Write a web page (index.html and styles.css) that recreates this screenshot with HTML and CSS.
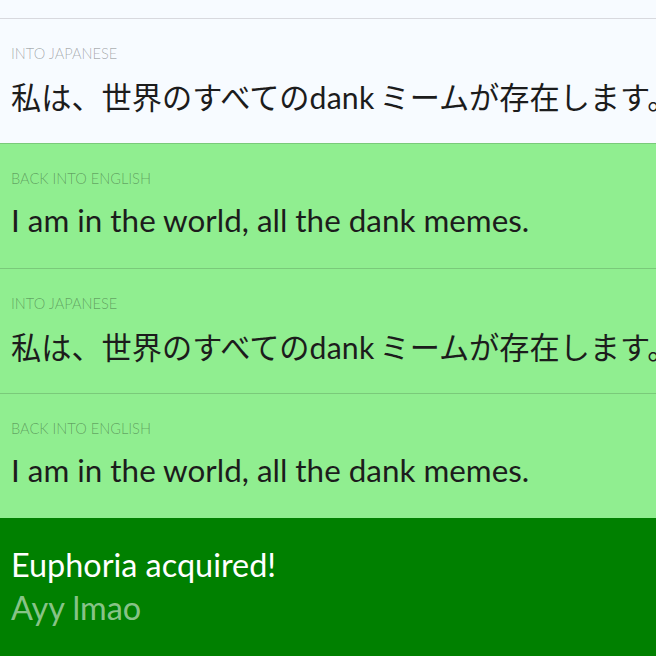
FILE: index.html
```html
<!DOCTYPE html>
<html lang="en">
<head>
<meta charset="utf-8">
<title>Translation Party</title>
<link rel="stylesheet" href="styles.css">
</head>
<body>
<div class="page">
  <div class="row row-light row-top"></div>
  <div class="row row-light">
    <div class="label">Into Japanese</div>
    <div class="phrase phrase-ja" lang="ja">私は、世界のすべての<span class="latin">dank</span>ミームが存在します。</div>
  </div>
  <div class="row row-green">
    <div class="label">Back into English</div>
    <div class="phrase">I am in the world, all the dank memes.</div>
  </div>
  <div class="row row-green">
    <div class="label">Into Japanese</div>
    <div class="phrase phrase-ja" lang="ja">私は、世界のすべての<span class="latin">dank</span>ミームが存在します。</div>
  </div>
  <div class="row row-green">
    <div class="label">Back into English</div>
    <div class="phrase">I am in the world, all the dank memes.</div>
  </div>
  <div class="result">
    <div class="result-title">Euphoria acquired!</div>
    <div class="result-sub">Ayy lmao</div>
  </div>
</div>
</body>
</html>
```
FILE: styles.css
```css
html, body {
  margin: 0;
  padding: 0;
  overflow: hidden;
  background: #f7fbff;
}
body {
  font-family: Lato, "Noto Sans CJK JP", sans-serif;
  color: #1c1c1c;
}
.page {
  width: 656px;
  height: 656px;
  overflow: hidden;
  display: flex;
  flex-direction: column;
}
.row {
  flex: none;
  height: 124px;
  border-top: 1px solid rgba(0, 0, 0, 0.15);
  padding: 26px 11px 0;
  box-sizing: content-box;
  white-space: nowrap;
}
.row-top {
  height: 0;
  padding: 0;
  margin-top: 18px;
  border-top: none;
  border-bottom: 1px solid #d8d9de;
}
.row-top + .row {
  border-top: none;
  height: 98px;
}
.row-light {
  background: #f7fbff;
}
.row-green {
  background: #90ee90;
  height: 98px;
}
.label {
  font-size: 14.6px;
  font-weight: 300;
  text-transform: uppercase;
  line-height: 16px;
  margin-top: 1px;
  color: rgba(0, 0, 0, 0.34);
}
.phrase {
  font-size: 31.4px;
  line-height: 40px;
  margin-top: 13px;
}
.phrase-ja {
  font-size: 30.2px;
  padding-top: 2px;
}
.latin {
  margin-right: 5px;
  letter-spacing: 0.2px;
}
.result {
  flex: 1;
  background: #008000;
  padding: 25px 11px 0;
}
.result-title {
  font-size: 32.4px;
  line-height: 43px;
  color: #ffffff;
}
.result-sub {
  font-size: 32.4px;
  line-height: 43px;
  color: rgba(255, 255, 255, 0.55);
}
```
